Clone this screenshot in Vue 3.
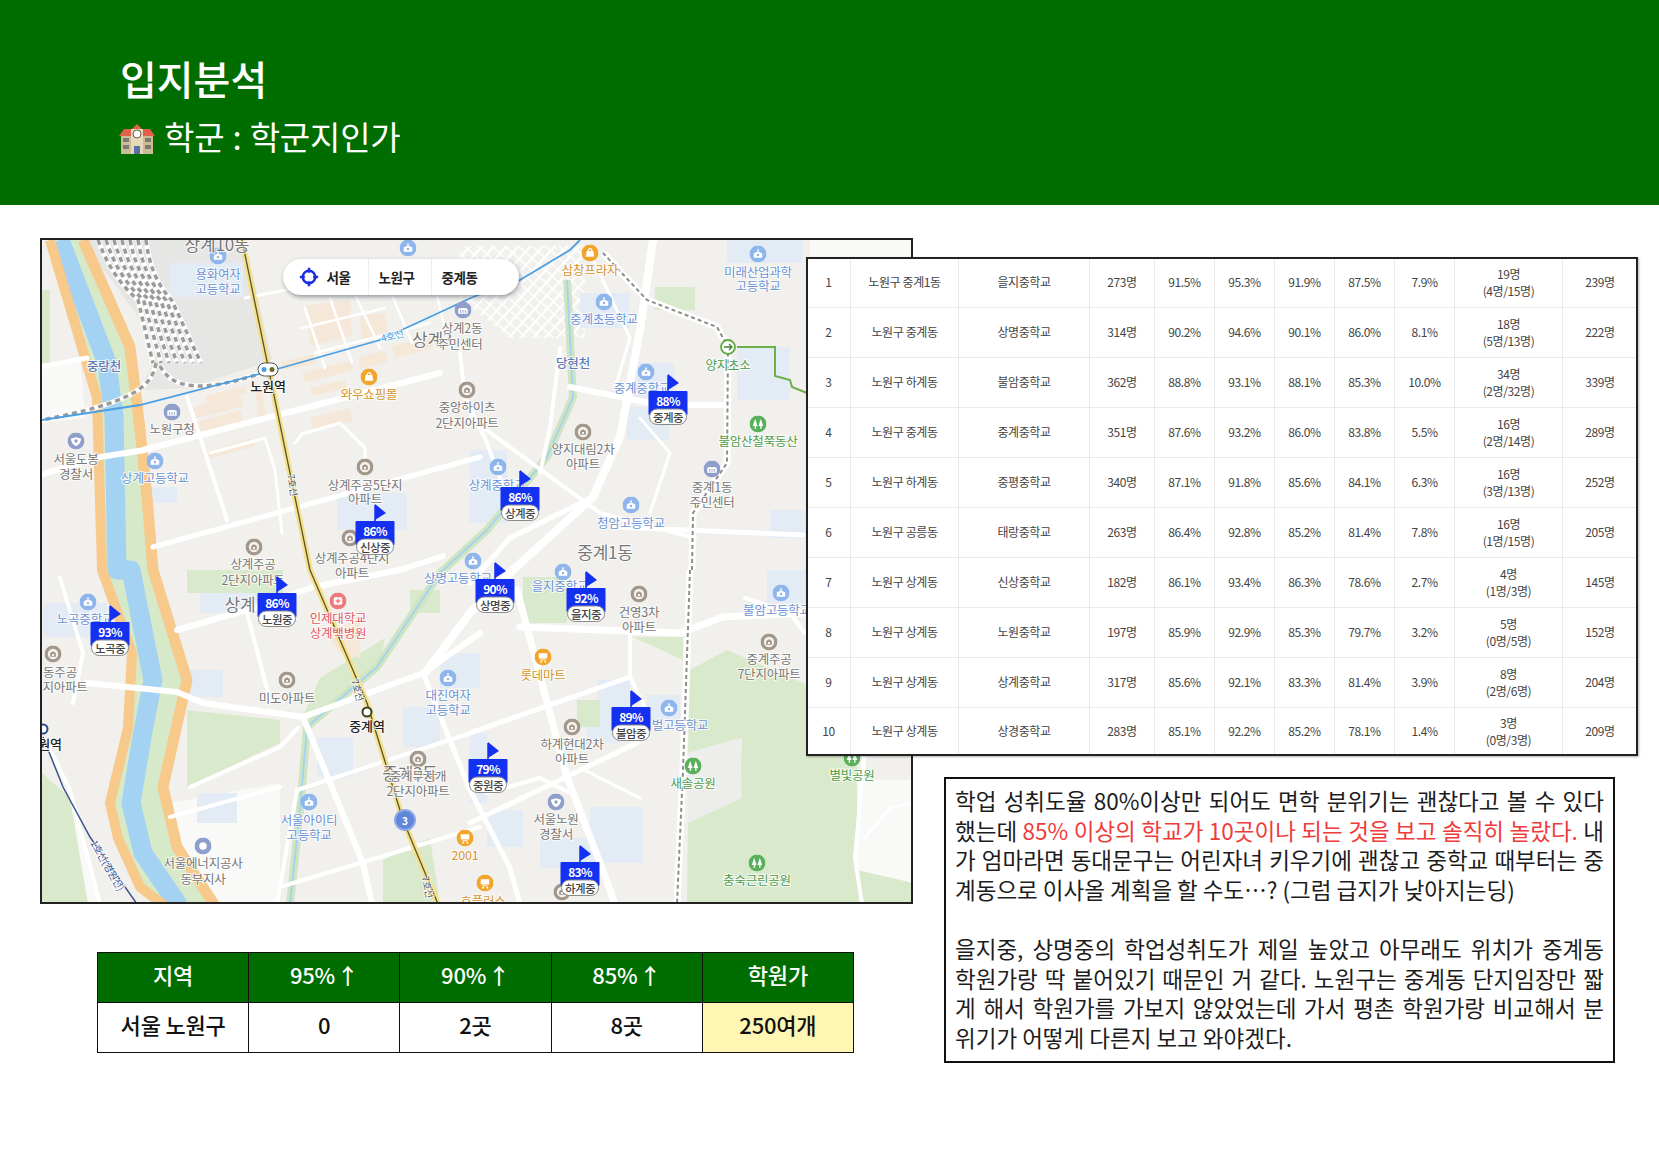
<template>
  <div class="page">
    <header class="banner">
      <h1 class="title">입지분석</h1>
      <div class="subtitle">
        <svg class="emoji" viewBox="0 0 36 32" aria-hidden="true">
          <rect x="2" y="12" width="32" height="19" fill="#cdbb98" />
          <polygon points="0,13 5,6 13,6 18,1 23,6 31,6 36,13" fill="#e2604a" />
          <rect x="12" y="6" width="12" height="25" fill="#e6d9b8" />
          <circle cx="18" cy="11" r="4" fill="#fff" stroke="#6d5c44" />
          <rect x="15" y="23" width="6" height="8" fill="#5a6fa5" />
          <g fill="#7d7a70">
            <rect x="4" y="15" width="6" height="4" /><rect x="4" y="22" width="6" height="4" />
            <rect x="26" y="15" width="6" height="4" /><rect x="26" y="22" width="6" height="4" />
          </g>
        </svg>
        <span>학군 : 학군지인가</span>
      </div>
    </header>

    <main class="content">
      <section class="left">
        <div class="map">
          <svg class="map-svg" viewBox="2 2 869 662" width="869" height="662">
            <defs>
              <pattern id="alley" width="9" height="9" patternUnits="userSpaceOnUse" patternTransform="rotate(42)">
                <rect width="9" height="9" fill="#f1f0ec" />
                <rect width="2.2" height="9" fill="#fff" />
                <rect width="9" height="1.4" fill="#fff" />
              </pattern>
              <symbol id="ic-school" viewBox="0 0 18 18">
                <circle cx="9" cy="9" r="9" fill="#8eb6ec" />
                <path d="M4.5 13V8.5L9 6l4.500 2.500V13z" fill="#fff" />
                <circle cx="9" cy="5" r="1" fill="#fff" />
                <circle cx="9" cy="10" r="1.300" fill="#8eb6ec" />
              </symbol>
              <symbol id="ic-apt" viewBox="0 0 18 18">
                <circle cx="9" cy="9" r="9" fill="#a3978b" />
                <circle cx="9" cy="9" r="5.500" fill="#f4f2ee" />
                <path d="M6 12V8l3-2 3 2v4z" fill="#a3978b" />
                <rect x="8" y="9" width="2" height="2" fill="#fff" />
              </symbol>
              <symbol id="ic-shop" viewBox="0 0 18 18">
                <circle cx="9" cy="9" r="9" fill="#f2a52b" />
                <path d="M4.500 13l1-6h7l1 6z" fill="#fff" />
                <path d="M7 7c0-3.500 4-3.500 4 0" fill="none" stroke="#fff" stroke-width="1.200" />
              </symbol>
              <symbol id="ic-cart" viewBox="0 0 18 18">
                <circle cx="9" cy="9" r="9" fill="#f2a52b" />
                <path d="M4.500 5h9v5.500h-9z" fill="#fff" />
                <rect x="6" y="11.500" width="6" height="1" fill="#fff" />
                <circle cx="7" cy="14" r="1" fill="#fff" /><circle cx="11.500" cy="14" r="1" fill="#fff" />
              </symbol>
              <symbol id="ic-gov" viewBox="0 0 18 18">
                <circle cx="9" cy="9" r="9" fill="#8f9ecb" />
                <path d="M4 13V8.500C4 6.500 14 6.500 14 8.500V13z" fill="#fff" />
                <path d="M6.500 9v3M9 9v3M11.500 9v3" stroke="#8f9ecb" />
              </symbol>
              <symbol id="ic-police" viewBox="0 0 18 18">
                <circle cx="9" cy="9" r="9" fill="#8f9ecb" />
                <path d="M3.500 6.500L9 5l5.500 1.500C14 10.500 12 13 9 14.500 6 13 4 10.500 3.500 6.500z" fill="#fff" />
                <circle cx="9" cy="9" r="1.800" fill="#8f9ecb" />
              </symbol>
              <symbol id="ic-park" viewBox="0 0 18 18">
                <circle cx="9" cy="9" r="9" fill="#58b05a" />
                <path d="M6 3.500L8.500 11H7v3H5.500v-3H3.500zM12 3.500L14.500 11H12.800v3H11.300v-3H9.500z" fill="#fff" />
              </symbol>
              <symbol id="ic-hospital" viewBox="0 0 18 18">
                <circle cx="9" cy="9" r="9" fill="#ec7a7c" />
                <rect x="4.500" y="5" width="9" height="8" rx="1.500" fill="#fff" />
                <path d="M9 6.500v5M6.500 9h5" stroke="#ec7a7c" stroke-width="1.500" />
              </symbol>
              <symbol id="ic-energy" viewBox="0 0 18 18">
                <circle cx="9" cy="9" r="9" fill="#8f9ecb" />
                <circle cx="9" cy="9" r="4" fill="#fff" />
              </symbol>
            </defs>

            <rect x="0" y="0" width="873" height="666" fill="#f1f0ec" />

            <polygon v-for="(p, i) in lightZones" :key="'lz' + i" :points="p" fill="#f9f9f8" />
            <polygon points="420,8 545,8 545,100 470,100 420,60" fill="url(#alley)" />
            <polygon points="38,2 205,2 232,122 150,150 100,152 120,110 70,40" fill="#e6e6e5" />
            <rect v-for="(z, i) in schoolZones" :key="'sz' + i" :x="z[0]" :y="z[1]" :width="z[2] - z[0]" :height="z[3] - z[1]" fill="#e3ebf5" />
            <polygon v-for="(p, i) in greens" :key="'g' + i" :points="p" fill="#d9e9cb" />
            <polygon points="648,515 700,500 702,560 648,585" fill="#ededeb" />
            <polygon v-for="(p, i) in beige" :key="'b' + i" :points="p" fill="#f6e8d9" />

            <!-- river and its banks, filled between the two expressway strands -->
            <polygon points="10,2 57,160 62,332 92,415 88,490 70,565 78,600 100,649 125,668 175,668 137,609 123,549 147,442 113,332 107,259 100,192 90,109 43,2" fill="#d6e9c9" />
            <path d="M20 2L67 125L74 179L77 332L91 332L113 442L102 499L91 565L103 615L139 668" fill="none" stroke="#a3d2f2" stroke-width="19" stroke-linejoin="round" />
            <path d="M10 2L57 160L62 332L92 415L88 490L70 565L78 600L100 649L125 668" fill="none" stroke="#f7c98a" stroke-width="10" stroke-linejoin="round" />
            <path d="M43 2L90 109L100 192L107 259L113 332L147 442L123 549L137 609L175 668" fill="none" stroke="#f7c98a" stroke-width="11" stroke-linejoin="round" />

            <!-- stream -->
            <path d="M527 42L533 159L507 219L447 292L400 335L337 429L267 489L260 572L250 666" fill="none" stroke="#cfe5c2" stroke-width="8" stroke-linejoin="round" />
            <path d="M527 42L533 159L507 219L447 292L400 335L337 429L267 489L260 572L250 666" fill="none" stroke="#a3d2f2" stroke-width="1.800" stroke-linejoin="round" />

            <!-- roads -->
            <path v-for="(r, i) in roads" :key="'r' + i" :d="r[0]" :stroke-width="r[1]" fill="none" stroke="#fff" stroke-linejoin="round" stroke-linecap="round" />

            <!-- rail yard -->
            <path v-for="(d, i) in yard" :key="'yb' + i" :d="d" fill="none" stroke="#fff" stroke-width="5" />
            <path v-for="(d, i) in yard" :key="'y' + i" :d="d" fill="none" stroke="#9b9b9b" stroke-width="3.500" stroke-dasharray="5 4" />

            <!-- rail lines -->
            <path d="M650 332L643 532L637 666M652 332L653 275L687 225L688 109L677 89L607 62L563 15" fill="none" stroke="#fff" stroke-width="7" />
            <path d="M650 332L643 532L637 666M652 332L653 275L687 225L688 109L677 89L607 62L563 15" fill="none" stroke="#8d8d8d" stroke-width="2" stroke-dasharray="4 3" />
            <path d="M2 182L100 167L223 135L340 102L433 59L480 42L530 12L540 2" fill="none" stroke="#4a9fe2" stroke-width="1.800" />
            <path d="M3 499L23 549L50 599L97 666" fill="none" stroke="#3b5590" stroke-width="1.500" />
            <path d="M202 2L270 332L327 465L363 582L398 666" fill="none" stroke="#f5e08f" stroke-width="6" stroke-linejoin="round" />
            <path d="M202 2L270 332L327 465L363 582L398 666" fill="none" stroke="#57552a" stroke-width="1.300" stroke-linejoin="round" />
            <path d="M697 109H735V138L750 142L752 149L767 155" fill="none" stroke="#6cb04a" stroke-width="2" />

            <!-- stations -->
            <rect x="218" y="125" width="20" height="13" rx="6.500" fill="#fff" stroke="#555" />
            <circle cx="224" cy="131.500" r="2.500" fill="#4a9fe2" />
            <circle cx="232" cy="131.500" r="2.500" fill="#6b6a22" />
            <circle cx="327" cy="474" r="4.500" fill="#fff" stroke="#3f3f1c" stroke-width="2" />
            <circle cx="3" cy="491" r="4.500" fill="#fff" stroke="#2c4a8c" stroke-width="2" />
            <circle cx="688" cy="109" r="7" fill="#fff" stroke="#5fa942" stroke-width="1.800" />
            <path d="M684 109h7M689 106l3 3-3 3" fill="none" stroke="#3f7f2c" stroke-width="1.300" />
            <circle cx="365" cy="582" r="10" fill="#5f86d8" stroke="#8fa9e4" stroke-width="2" />

            <use v-for="(c, i) in icons" :key="'ic' + i" :href="'#ic-' + c[0]" :x="c[1] - 8.500" :y="c[2] - 8.500" width="17" height="17" />

            <text v-for="(l, i) in labels" :key="'l' + i" :class="['lb', l[0]]" :x="l[2]" :y="l[3]" :transform="l[4] ? `rotate(${l[4]} ${l[2]} ${l[3]})` : null">{{ l[1] }}</text>
            <text class="road-no" x="365" y="582">3</text>

            <g v-for="f in flags" :key="f.name" :transform="`translate(${f.x} ${f.y})`">
              <line x1="0" y1="-16" x2="0" y2="1" stroke="#1430f0" stroke-width="1.500" />
              <polygon points="0,-17 11,-8 0,-1" fill="#1430f0" />
              <rect x="-19.500" y="0" width="39" height="24" rx="1" fill="#1430f0" />
              <text class="flag-pct" x="0" y="9.500">{{ f.pct }}</text>
              <rect x="-18.500" y="18" width="37" height="15.500" rx="7.700" fill="#fff" stroke="#8a8a8a" />
              <text class="flag-name" x="0" y="25.500">{{ f.name }}</text>
            </g>
          </svg>

          <nav class="crumbs">
            <div class="crumb first">
              <svg class="target" viewBox="0 0 24 24" aria-hidden="true">
                <circle cx="12" cy="12" r="7.500" fill="none" stroke="#1a2fe0" stroke-width="3" />
                <path d="M12 1v6M12 17v6M1 12h6M17 12h6" stroke="#1a2fe0" stroke-width="3" />
              </svg>
              <span>서울</span>
            </div>
            <div class="crumb">노원구</div>
            <div class="crumb">중계동</div>
          </nav>
        </div>

        <table class="summary">
          <thead>
            <tr><th v-for="h in summaryHead" :key="h">{{ h }}</th></tr>
          </thead>
          <tbody>
            <tr>
              <td>서울 노원구</td><td>0</td><td>2곳</td><td>8곳</td><td class="hl">250여개</td>
            </tr>
          </tbody>
        </table>
      </section>

      <section class="right">
        <table class="schools">
          <colgroup>
            <col v-for="(w, i) in colWidths" :key="i" :class="'c' + i" />
          </colgroup>
          <tbody>
            <tr v-for="r in schools" :key="r[0]">
              <td v-for="(v, i) in r.slice(0, 9)" :key="i">{{ v }}</td>
              <td>{{ r[9] }}<br />{{ r[10] }}</td>
              <td>{{ r[11] }}</td>
            </tr>
          </tbody>
        </table>

        <article class="note">
          <p class="jl">학업 성취도율 80%이상만 되어도 면학 분위기는 괜찮다고 볼 수 있다</p>
          <p class="jl">했는데 <span class="red">85% 이상의 학교가 10곳이나 되는 것을 보고 솔직히 놀랐다.</span> 내</p>
          <p class="jl">가 엄마라면 동대문구는 어린자녀 키우기에 괜찮고 중학교 때부터는 중</p>
          <p>계동으로 이사올 계획을 할 수도…? (그럼 급지가 낮아지는딩)</p>
          <p class="blank">&nbsp;</p>
          <p class="jl">을지중, 상명중의 학업성취도가 제일 높았고 아무래도 위치가 중계동</p>
          <p class="jl">학원가랑 딱 붙어있기 때문인 거 같다. 노원구는 중계동 단지임장만 짧</p>
          <p class="jl">게 해서 학원가를 가보지 않았었는데 가서 평촌 학원가랑 비교해서 분</p>
          <p>위기가 어떻게 다른지 보고 와야겠다.</p>
        </article>
      </section>
    </main>
  </div>
</template>

<script setup>
const summaryHead = ['지역', '95% ↑', '90% ↑', '85% ↑', '학원가']
const colWidths = Array.from({ length: 11 })

const schools = [
  ['1', '노원구 중계1동', '을지중학교', '273명', '91.5%', '95.3%', '91.9%', '87.5%', '7.9%', '19명', '(4명/15명)', '239명'],
  ['2', '노원구 중계동', '상명중학교', '314명', '90.2%', '94.6%', '90.1%', '86.0%', '8.1%', '18명', '(5명/13명)', '222명'],
  ['3', '노원구 하계동', '불암중학교', '362명', '88.8%', '93.1%', '88.1%', '85.3%', '10.0%', '34명', '(2명/32명)', '339명'],
  ['4', '노원구 중계동', '중계중학교', '351명', '87.6%', '93.2%', '86.0%', '83.8%', '5.5%', '16명', '(2명/14명)', '289명'],
  ['5', '노원구 하계동', '중평중학교', '340명', '87.1%', '91.8%', '85.6%', '84.1%', '6.3%', '16명', '(3명/13명)', '252명'],
  ['6', '노원구 공릉동', '태랑중학교', '263명', '86.4%', '92.8%', '85.2%', '81.4%', '7.8%', '16명', '(1명/15명)', '205명'],
  ['7', '노원구 상계동', '신상중학교', '182명', '86.1%', '93.4%', '86.3%', '78.6%', '2.7%', '4명', '(1명/3명)', '145명'],
  ['8', '노원구 상계동', '노원중학교', '197명', '85.9%', '92.9%', '85.3%', '79.7%', '3.2%', '5명', '(0명/5명)', '152명'],
  ['9', '노원구 상계동', '상계중학교', '317명', '85.6%', '92.1%', '83.3%', '81.4%', '3.9%', '8명', '(2명/6명)', '204명'],
  ['10', '노원구 상계동', '상경중학교', '283명', '85.1%', '92.2%', '85.2%', '78.1%', '1.4%', '3명', '(0명/3명)', '209명']
]

const flags = [
  { name: '신상중', pct: '86%', x: 335, y: 283 },
  { name: '중계중', pct: '88%', x: 628, y: 153 },
  { name: '상계중', pct: '86%', x: 480, y: 249 },
  { name: '노원중', pct: '86%', x: 237, y: 355 },
  { name: '노곡중', pct: '93%', x: 70, y: 384 },
  { name: '상명중', pct: '90%', x: 455, y: 341 },
  { name: '을지중', pct: '92%', x: 546, y: 350 },
  { name: '불암중', pct: '89%', x: 591, y: 469 },
  { name: '중원중', pct: '79%', x: 448, y: 521 },
  { name: '하계중', pct: '83%', x: 540, y: 624 }
]

const lightZones = [
  '817,542 873,542 873,666 817,666',
  '130,565 240,545 240,666 130,666',
  '2,545 30,560 60,666 2,666',
  '770,2 873,2 873,90 770,90',
  '2,130 40,120 45,180 2,185'
]

const schoolZones = [
  [130, 25, 203, 59], [540, 55, 590, 90], [593, 125, 634, 160], [587, 169, 630, 202],
  [697, 109, 750, 162], [430, 225, 445, 270], [430, 212, 467, 285], [687, 2, 763, 25],
  [108, 249, 137, 265], [297, 255, 367, 292], [150, 432, 183, 459], [157, 555, 197, 585],
  [277, 499, 313, 539], [363, 469, 400, 509], [400, 415, 440, 450], [3, 365, 67, 399],
  [160, 355, 217, 375], [430, 495, 447, 565], [557, 442, 590, 472], [547, 472, 580, 505],
  [607, 457, 640, 485], [447, 572, 483, 609], [500, 600, 560, 630], [550, 569, 603, 625],
  [727, 332, 767, 365], [730, 272, 767, 300]
]

const greens = [
  '615,49 655,49 655,72 615,72',
  '147,332 243,332 243,355 147,355',
  '483,339 527,339 527,385 483,385',
  '537,462 560,462 560,489 537,489',
  '593,399 643,399 643,422',
  '343,622 390,600 400,666 343,666',
  '370,352 400,352 400,375 370,375',
  '2,52 10,52 10,125 2,125',
  '650,432 687,412 763,445 817,499 817,632 873,645 873,666 647,666 648,585 700,560 702,500 648,515',
  '147,472 240,482 240,505 147,549',
  '2,535 30,560 48,666 2,666',
  '268,489 340,425 345,400 280,440 262,480'
]

const beige = [
  '150,170 200,157 204,168 154,181',
  '150,186 200,172 204,184 154,198',
  '162,215 212,200 215,208 165,222',
  '215,150 222,148 226,178 218,180',
  '262,135 312,122 314,132 265,145',
  '270,150 305,142 307,150 272,158',
  '270,180 310,170 313,183 274,192',
  '318,120 345,112 348,124 320,131',
  '352,108 390,98 393,110 355,120',
  '240,124 274,116 276,126 243,132',
  '165,158 205,148 207,155 168,165',
  '265,68 310,62 312,98 270,108',
  '320,78 345,75 348,96 322,102',
  '286,395 320,380 320,420 300,415'
]

const yard = [0, 1, 2, 3, 4, 5, 6].map((i) => {
  const x = i * 8
  return `M${58 + x} 2Q${72 + x * 0.8} 40 ${98 + x * 0.7} 62L${113 + x} 125`
})
yard.push('M116 125C112 150 90 165 2 182')
yard.push('M120 128C132 150 160 158 236 130')

const roads = [
  ['M103 212L257 172L400 135', 6],
  ['M113 309L440 219', 5],
  ['M0 129L47 120', 5],
  ['M0 237L60 219L105 212', 6],
  ['M147 159L187 282', 4],
  ['M170 215L225 200L235 232L242 295', 3],
  ['M255 205L262 196L300 185L325 210L325 228', 3],
  ['M613 2L600 92L580 199L553 259L473 332L430 375L385 435', 8],
  ['M530 149L620 167L687 167', 6],
  ['M573 289L763 297', 5],
  ['M480 389L640 395L683 379L763 375', 7],
  ['M477 352L527 539L560 625L575 666', 7],
  ['M430 495L590 439', 5],
  ['M430 585L597 505', 5],
  ['M590 395V439L605 470', 4],
  ['M47 445L137 454L163 465L263 479L383 435L440 395', 6],
  ['M263 479L323 625L332 666', 6],
  ['M137 392L217 369L273 349L360 332L403 318', 6],
  ['M207 375L230 462', 4],
  ['M383 435L430 552L470 630L480 666', 5],
  ['M130 579L240 549', 4],
  ['M150 549L240 509L258 490', 4],
  ['M237 666L257 552L440 492', 4],
  ['M240 649L440 589', 4],
  ['M7 505L30 552L60 666', 4],
  ['M20 340L43 415L33 465', 4],
  ['M430 345L470 300L553 259', 5],
  ['M420 115L425 160L445 200L460 240', 4],
  ['M430 180L560 275L655 300', 4],
  ['M520 110L510 190L500 235', 4],
  ['M600 180L630 215L610 275', 3],
  ['M205 60L270 47L340 30', 3],
  ['M265 70L285 130M290 60L312 125M312 50L340 110M345 40L372 105M262 90L345 70M275 115L390 85M395 50L405 90', 2.500],
  ['M550 15L590 100L575 150', 3],
  ['M530 555L500 540L447 555', 4],
  ['M705 360L750 375L765 395', 4],
  ['M824 520L815 620L822 666', 4],
  ['M825 600L850 570L873 565', 2],
  ['M540 530L600 560', 3]
]

const icons = [
  ['school', 178, 18], ['school', 368, 10], ['shop', 329, 139], ['gov', 132, 174], ['police', 36, 203],
  ['school', 115, 223], ['gov', 423, 72], ['apt', 427, 152], ['apt', 325, 229], ['apt', 214, 309], ['apt', 310, 300],
  ['shop', 550, 15], ['school', 718, 16], ['school', 564, 64], ['school', 606, 134], ['park', 718, 186],
  ['apt', 543, 194], ['school', 458, 229], ['gov', 672, 231], ['school', 591, 267], ['school', 48, 364],
  ['apt', 13, 416], ['hospital', 298, 363], ['apt', 247, 442], ['school', 408, 440], ['apt', 378, 521],
  ['school', 269, 564], ['cart', 425, 600], ['energy', 163, 608], ['school', 433, 323], ['school', 523, 334],
  ['apt', 599, 356], ['school', 741, 355], ['apt', 729, 404], ['cart', 503, 419], ['school', 629, 470],
  ['apt', 532, 489], ['park', 653, 528], ['park', 812, 520], ['police', 516, 564], ['park', 717, 625],
  ['cart', 445, 645], ['apt', 522, 654]
]

const labels = [
  ['big', '상계10동', 177, 5], ['school', '용화여자', 178, 35], ['school', '고등학교', 178, 50],
  ['slate', '중랑천', 64, 127], ['station', '노원역', 228, 147], ['orange', '와우쇼핑몰', 329, 155],
  ['gray', '노원구청', 132, 190], ['gray', '서울도봉', 36, 220], ['gray', '경찰서', 36, 235],
  ['school', '상계고등학교', 115, 239], ['line', '4호선', 352, 97, -15], ['big', '상계3', 392, 100],
  ['gray', '상계2동', 422, 89], ['gray', '주민센터', 420, 105], ['gray', '중앙하이츠', 427, 168], ['gray', '2단지아파트', 427, 184],
  ['line7', '7호선', 253, 247, 80], ['gray', '상계주공5단지', 325, 246], ['gray', '아파트', 325, 260],
  ['gray', '상계주공', 213, 325], ['gray', '2단지아파트', 213, 341], ['gray', '상계주공4단지', 312, 319], ['gray', '아파트', 312, 334],
  ['orange', '삼창프라자', 550, 31], ['school', '미래산업과학', 718, 33], ['school', '고등학교', 718, 47],
  ['school', '중계초등학교', 564, 80], ['slate', '당현천', 533, 124], ['green', '양지초소', 688, 126],
  ['school', '중계중학교', 602, 149], ['green', '불암산철쭉동산', 718, 202], ['gray', '양지대림2차', 543, 210], ['gray', '아파트', 543, 225],
  ['school', '상계중학교', 457, 246], ['gray', '중계1동', 672, 248], ['gray', '주민센터', 672, 263],
  ['school', '청암고등학교', 591, 284], ['big', '중계1동', 565, 313],
  ['school', '노곡중학교', 45, 380], ['gray', '동주공', 20, 433], ['gray', '지아파트', 25, 448], ['big', '상계', 200, 365],
  ['red', '인제대학교', 298, 379], ['red', '상계백병원', 298, 394], ['gray', '미도아파트', 247, 459],
  ['school', '대진여자', 408, 456], ['school', '고등학교', 408, 471], ['station', '중계역', 327, 487], ['station', '원역', 10, 505],
  ['big', '중계3동', 370, 534], ['gray', '중계무지개', 378, 537], ['gray', '2단지아파트', 378, 552],
  ['school', '서울아이티', 269, 581], ['school', '고등학교', 269, 596], ['orange', '2001', 425, 616],
  ['gray', '서울에너지공사', 163, 624], ['gray', '동부지사', 163, 640], ['rail1', '1호선(경원선)', 68, 627, 60],
  ['school', '상명고등학교', 418, 339], ['line7', '7호선', 318, 452, 75], ['line7', '7호선', 388, 649, 78],
  ['school', '을지중학교', 520, 347], ['gray', '건영3차', 599, 373], ['gray', '아파트', 599, 388], ['school', '불암고등학교', 737, 371],
  ['gray', '중계주공', 729, 420], ['gray', '7단지아파트', 729, 435], ['orange', '롯데마트', 503, 436], ['school', '벌고등학교', 640, 486],
  ['gray', '하계현대2차', 532, 505], ['gray', '아파트', 532, 520], ['green', '새솔공원', 653, 544], ['green', '별빛공원', 812, 536],
  ['gray', '서울노원', 516, 580], ['gray', '경찰서', 516, 595], ['green', '충숙근린공원', 717, 641], ['orange', '호플러스', 443, 662]
]
</script>

<style>
html,
body {
  margin: 0;
  background: #fff;
}
</style>

<style scoped>
.page {
  width: 1659px;
  height: 1168px;
  overflow: hidden;
  background: #fff;
  font-family: "Noto Sans CJK KR", "Noto Sans", sans-serif;
  color: #111;
}

.banner {
  height: 205px;
  box-sizing: border-box;
  background: #006d00;
  color: #fff;
  padding: 50px 0 0 120px;
}

.title {
  margin: 0;
  font-size: 40px;
  line-height: 56px;
  font-weight: 500;
}

.subtitle {
  display: flex;
  align-items: center;
  gap: 9px;
  margin: 2px 0 0 -1px;
  font-size: 33px;
  line-height: 56px;
  font-weight: 400;
  word-spacing: 1px;
  letter-spacing: -0.2px;
}

.emoji {
  width: 36px;
  height: 32px;
  margin-top: 5px;
}

.content {
  display: flex;
  align-items: flex-start;
  padding: 33px 0 0 40px;
}

.left {
  width: 873px;
  flex: none;
}

.map {
  position: relative;
  width: 869px;
  height: 662px;
  border: 2px solid #222;
}

.map-svg {
  display: block;
}

.lb {
  font-size: 12.5px;
  text-anchor: middle;
  dominant-baseline: central;
  paint-order: stroke;
  stroke: #fff;
  stroke-width: 2px;
  stroke-opacity: 0.8;
  letter-spacing: -0.2px;
}

.school { fill: #6b93d6; }
.gray { fill: #777; }
.orange { fill: #d5952e; }
.green { fill: #4f9c4a; }
.red { fill: #e4585f; }
.slate { fill: #5e7bb8; font-weight: 500; }
.station { fill: #222; font-weight: 500; font-size: 13px; }
.big { fill: #777; font-size: 17px; }
.line { fill: #4a9fe2; font-size: 10px; }
.line7 { fill: #555; font-size: 9.500px; }
.rail1 { fill: #3b5590; font-size: 10px; }

.road-no {
  fill: #fff;
  font-size: 10px;
  font-weight: 700;
  text-anchor: middle;
  dominant-baseline: central;
}

.flag-pct {
  fill: #fff;
  font-size: 12px;
  font-weight: 700;
  text-anchor: middle;
  dominant-baseline: central;
  letter-spacing: -0.8px;
}

.flag-name {
  fill: #444;
  font-size: 11.500px;
  font-weight: 500;
  text-anchor: middle;
  dominant-baseline: central;
  letter-spacing: -0.5px;
}

.crumbs {
  position: absolute;
  left: 241px;
  top: 19px;
  width: 236px;
  height: 36px;
  display: flex;
  background: #fff;
  border-radius: 18px;
  box-shadow: 1px 2px 4px rgba(60, 60, 80, 0.5);
  font-size: 13.500px;
  font-weight: 700;
  letter-spacing: -0.5px;
  color: #222;
}

.crumb {
  display: flex;
  align-items: center;
  justify-content: center;
  width: 63px;
  padding-right: 7px;
  box-sizing: border-box;
  border-left: 1px solid #eee;
}

.crumb.first {
  width: 85px;
  border-left: none;
  gap: 8px;
  padding: 0 2px 0 0;
}

.crumb + .crumb:last-child {
  width: 87px;
  padding-right: 31px;
}

.target {
  width: 20px;
  height: 20px;
}

.summary {
  margin: 48px 0 0 57px;
  width: 757px;
  height: 101px;
  table-layout: fixed;
  border-collapse: collapse;
  font-size: 22px;
  text-align: center;
}

.summary th,
.summary td {
  border: 1.500px solid #111;
  padding: 0 0 7px;
  box-sizing: border-box;
  height: 50px;
  font-weight: 500;
  letter-spacing: -0.2px;
}

.summary th {
  background: #006d00;
  color: #fff;
  word-spacing: -3px;
}

.summary .hl {
  background: #fff6b3;
}

.right {
  flex: none;
  width: 832px;
  margin: 19px 0 0 -107px;
  position: relative;
}

.schools {
  width: 832px;
  table-layout: fixed;
  border-collapse: collapse;
  background: #fff;
  outline: 2px solid #222;
  outline-offset: -2px;
  box-shadow: 1px 1px 2px rgba(0, 0, 0, 0.3);
  font-size: 12px;
  line-height: 17px;
  letter-spacing: -0.4px;
  color: #444;
  text-align: center;
}

.schools td {
  padding: 0 0 2px;
  border: 1px solid #e9e9e9;
  box-sizing: border-box;
  height: 50px;
}

.schools tr:last-child td {
  height: 48px;
}

.c0 { width: 44px; }
.c1 { width: 108px; }
.c2 { width: 131px; }
.c3 { width: 65px; }
.c4, .c5, .c6, .c7, .c8 { width: 60px; }
.c9 { width: 108px; }

.note {
  margin: 21px 0 0 138px;
  width: 671px;
  height: 286px;
  box-sizing: border-box;
  border: 2px solid #111;
  padding: 7px 9px 0 9px;
  font-size: 22.500px;
  line-height: 29.600px;
  color: #1c1c1c;
}

.note p {
  margin: 0;
  white-space: nowrap;
}

.note .jl {
  white-space: normal;
  text-align: justify;
  text-align-last: justify;
}

.note .red {
  color: #f03b3b;
}
</style>
